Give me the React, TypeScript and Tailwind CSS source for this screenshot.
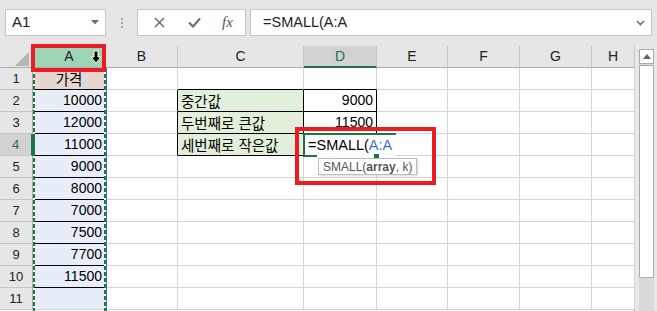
import React from "react";

const COLS = [33, 73, 72, 126, 73, 71, 72, 72, 43];
const LETTERS = ["", "A", "B", "C", "D", "E", "F", "G", "H"];
const AVALS = ["가격", "10000", "12000", "11000", "9000", "8000", "7000", "7500", "7700", "11500", ""];
const FONT = { fontFamily: '"Liberation Sans", "Noto Sans CJK KR", sans-serif' };

function DownArrow() {
  return (
    <svg width="12" height="14" viewBox="0 0 12 14">
      <path d="M4 1 H8 V7 H11 L6 13 L1 7 H4 Z" fill="#000" stroke="#fff" strokeWidth="1" />
    </svg>
  );
}

function Cell({ r, c }: { r: number; c: number }) {
  let rightBlack = false;
  let bottomBlack = false;
  let bg = "bg-white";
  let content: React.ReactNode = null;
  let align = "justify-end";
  if (c === 1) {
    bg = r === 1 ? "bg-[#e6d6d2]" : "bg-[#e8eef8]";
    if (r <= 10) bottomBlack = true;
    const v = AVALS[r - 1];
    content = r === 1 ? <span className="relative top-[2px] text-[14.5px]">{v}</span> : v;
    if (r === 1) align = "justify-center";
  }
  if (r === 1 && (c === 3 || c === 4)) bottomBlack = true;
  if (r >= 2 && r <= 4) {
    if (c === 2 || c === 3 || c === 4) rightBlack = true;
    if (c === 3 || c === 4) bottomBlack = true;
    if (c === 3) {
      bg = "bg-[#e2efda]";
      align = "justify-start";
      content = (
        <span className="relative top-[2px] text-[14.5px]">{["중간값", "두번째로 큰값", "세번째로 작은값"][r - 2]}</span>
      );
    }
    if (c === 4 && r === 2) content = "9000";
    if (c === 4 && r === 3) content = "11500";
  }
  const isEdit = r === 4 && c === 4;
  return (
    <div
      className={`relative flex h-[22px] items-center whitespace-nowrap border-r border-b px-[3px] text-[14px] text-black ${align} ${bg} ${
        rightBlack ? "border-r-black" : "border-r-[#d4d4d4]"
      } ${bottomBlack ? "border-b-black" : "border-b-[#d4d4d4]"} ${isEdit ? "z-10" : ""}`}
    >
      {content}
      {isEdit && (
        <div className="absolute left-[-1px] top-[-1px] flex h-[23px] items-center whitespace-nowrap border-l-[2px] border-t-[2px] border-[#217346] bg-white pl-[3px] pr-[4px] text-[14.5px]">
          <span>=SMALL(</span>
          <span className="text-[#3a6fd0]">A:A</span>
          <div className="absolute left-[-2px] top-[20px] h-[2px] w-[14px] bg-[#217346]" />
        </div>
      )}
      {isEdit && <div className="absolute right-[-3px] bottom-[-4px] z-20 h-[5px] w-[5px] bg-[#217346]" />}
    </div>
  );
}

export default function App() {
  return (
    <div className="relative flex h-[311px] w-[657px] flex-col overflow-hidden bg-[#e6e6e6]" style={FONT}>
      {/* Formula bar */}
      <div className="flex h-[46px] items-start pl-[5px] pt-[9px]">
        <div className="flex h-[27px] w-[101px] items-center justify-between border border-[#c6c6c6] bg-white pl-[6px] pr-[6px] text-[15px] text-[#222]">
          <span>A1</span>
          <svg width="8" height="5" viewBox="0 0 8 5">
            <path d="M0 0 H8 L4 4.5 Z" fill="#707070" />
          </svg>
        </div>
        <div className="flex h-[27px] w-[31px] flex-col items-center justify-center gap-[2px]">
          <div className="h-[2px] w-[2px] bg-[#a8a8a8]" />
          <div className="h-[2px] w-[2px] bg-[#a8a8a8]" />
          <div className="h-[2px] w-[2px] bg-[#a8a8a8]" />
        </div>
        <div className="flex h-[27px] w-[109px] items-center border border-[#c6c6c6] bg-white">
          <div className="flex w-[40px] justify-center pl-[2px]">
            <svg width="11" height="11" viewBox="0 0 11 11">
              <path d="M1 1 L10 10 M10 1 L1 10" stroke="#707070" strokeWidth="1.6" />
            </svg>
          </div>
          <div className="flex w-[32px] justify-center">
            <svg width="13" height="11" viewBox="0 0 13 11">
              <path d="M1 5.5 L5 9.5 L12 1.5" stroke="#707070" strokeWidth="2.2" fill="none" />
            </svg>
          </div>
          <div
            className="w-[35px] text-center text-[15px] italic leading-none text-[#555]"
            style={{ fontFamily: '"Liberation Serif", serif' }}
          >
            fx
          </div>
        </div>
        <div className="ml-[4px] flex h-[27px] w-[402px] items-center justify-between border border-[#c6c6c6] bg-white pl-[12px] pr-[6px] text-[14.5px] text-[#222]">
          <span>=SMALL(A:A</span>
          <svg width="9" height="6" viewBox="0 0 9 6">
            <path d="M1 1 L4.5 4.5 L8 1" stroke="#707070" strokeWidth="1.6" fill="none" />
          </svg>
        </div>
      </div>

      {/* Sheet */}
      <div className="flex flex-1">
        <div className="relative w-[635px] border-r border-[#a6a6a6] bg-white">
          <div className="grid" style={{ gridTemplateColumns: COLS.map((w) => `${w}px`).join(" ") }}>
            {LETTERS.map((l, i) => {
              if (i === 0)
                return (
                  <div key="corner" className="relative h-[22px] border-r border-b border-[#ababab] bg-[#e6e6e6]">
                    <svg className="absolute left-[15px] top-[6px]" width="14" height="14" viewBox="0 0 14 14">
                      <path d="M14 0 V14 H0 Z" fill="#b4b4b4" />
                    </svg>
                  </div>
                );
              const sel = l === "D";
              const isA = l === "A";
              return (
                <div
                  key={l}
                  className={`relative flex h-[22px] items-center justify-center border-r text-[14px] ${
                    isA
                      ? "border-b border-b-[#ababab] bg-[#9fd5b7] text-[#222]"
                      : sel
                      ? "border-b-2 border-b-[#217346] bg-[#d2d2d2] text-[#217346]"
                      : "border-b border-b-[#ababab] bg-[#e6e6e6] text-[#222]"
                  } border-r-[#c6c6c6]`}
                >
                  {l}
                  {isA && (
                    <div className="absolute left-[57px] top-[4px]">
                      <DownArrow />
                    </div>
                  )}
                </div>
              );
            })}
            {Array.from({ length: 11 }).map((_, ri) => {
              const r = ri + 1;
              const sel = r === 4;
              return (
                <React.Fragment key={r}>
                  <div
                    className={`flex h-[22px] items-center justify-center border-b border-b-[#c6c6c6] text-[13px] ${
                      sel ? "border-r-2 border-r-[#217346] bg-[#d2d2d2] text-[#217346]" : "border-r border-r-[#ababab] bg-[#e6e6e6] text-[#222]"
                    }`}
                  >
                    {r}
                  </div>
                  {Array.from({ length: 8 }).map((__, ci) => (
                    <Cell key={ci} r={r} c={ci + 1} />
                  ))}
                </React.Fragment>
              );
            })}
          </div>

          {/* marching ants on column A */}
          <div className="absolute left-[33px] top-[22px] h-[250px] w-[2px] bg-[repeating-linear-gradient(to_bottom,#217346_0px,#217346_4px,#ffffff_4px,#ffffff_6px)]" />
          <div className="absolute left-[104px] top-[22px] h-[250px] w-[2px] bg-[repeating-linear-gradient(to_bottom,#217346_0px,#217346_4px,#ffffff_4px,#ffffff_6px)]" />
          <div className="absolute left-[106px] top-[22px] h-[250px] w-[1px] bg-[#3a6fd0]" />
          <div className="absolute left-[32px] top-[88px] h-[22px] w-[3px] bg-[#217346]" />

          {/* red highlight around A header */}
          <div className="absolute left-[31px] top-[-2px] h-[28px] w-[75px] border-[4px] border-[#ed1c24]" />

          {/* tooltip */}
          <div className="absolute left-[318px] top-[112px] z-30 flex h-[17px] items-center border border-[#bdbdbd] bg-white px-[4px] text-[12px] text-[#555] shadow-[1px_1px_2px_rgba(0,0,0,0.15)]">
            SMALL(<span className="font-bold">array</span>, k)
          </div>

          {/* red highlight around edit */}
          <div className="absolute left-[295px] top-[81px] z-40 h-[58px] w-[141px] border-[4px] border-[#ed1c24]" />
        </div>

        {/* scrollbar */}
        <div className="flex w-[22px] flex-col bg-[#e8e8e8] pl-[4px] pr-[3px] pt-[3px]">
          <div className="flex h-[15px] w-[15px] items-center justify-center border border-[#ababab] bg-white">
            <svg width="8" height="5" viewBox="0 0 8 5">
              <path d="M0 5 H8 L4 0 Z" fill="#606060" />
            </svg>
          </div>
          <div className="flex flex-1 flex-col bg-[#dadada]">
            <div className="mt-[1px] h-[213px] w-[15px] border border-[#ababab] bg-white" />
          </div>
        </div>
      </div>
    </div>
  );
}
